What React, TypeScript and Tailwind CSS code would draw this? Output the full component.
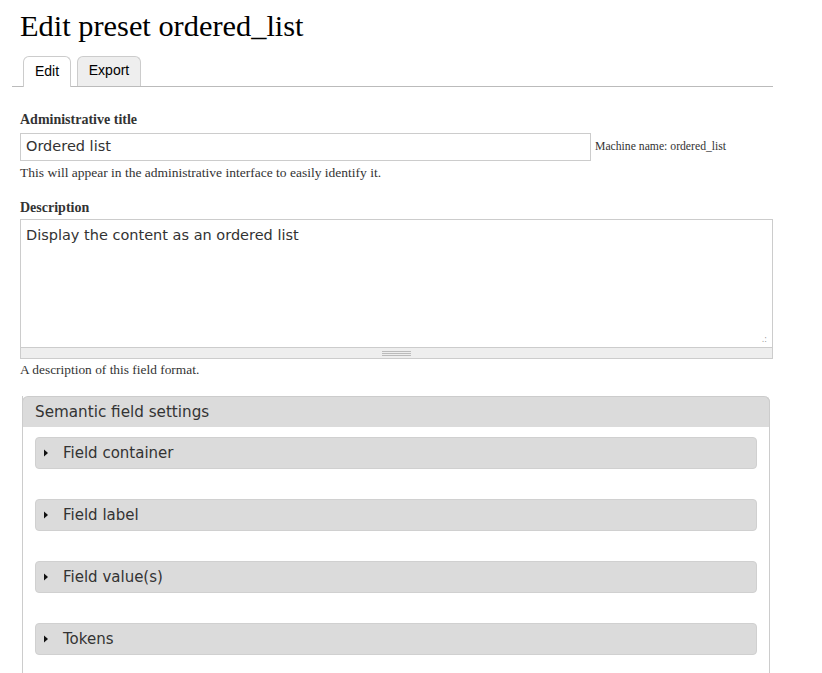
const sections = ["Field container", "Field label", "Field value(s)", "Tokens"];

const App = () => {
  return (
    <div className="min-h-[673px] bg-white pl-5 pr-[49px] pt-[6px] font-['Liberation_Serif',serif] text-[#333]">
      <h1 className="text-[30.4px] leading-[40px] text-black">Edit preset ordered_list</h1>

      <div className="-ml-2 mt-[10px] flex gap-[6px] border-b border-[#bbb] pl-[11px] font-['Liberation_Sans',sans-serif] text-sm">
        <div className="-mb-px flex h-[31px] w-[48px] items-center justify-center rounded-t-md border border-b-0 border-[#ccc] bg-white pb-[3px] text-black">
          Edit
        </div>
        <div className="mb-0 flex h-[30px] w-[64px] items-center justify-center rounded-t-md border border-b-0 border-[#ccc] bg-[#eee] pb-[3px] text-black">
          Export
        </div>
      </div>

      <div className="mt-[25px]">
        <label className="block text-sm font-bold leading-4">Administrative title</label>
        <div className="mt-[5px] flex items-center">
          <div className="flex h-[28px] w-[571px] items-center border border-[#ccc] px-[5px] font-['DejaVu_Sans',sans-serif] text-[14.5px]">
            Ordered list
          </div>
          <span className="ml-1 text-[11.7px]">Machine name: ordered_list</span>
        </div>
        <p className="mt-[4px] text-[13.5px] leading-4">This will appear in the administrative interface to easily identify it.</p>
      </div>

      <div className="mt-[19px]">
        <label className="block text-sm font-bold leading-4">Description</label>
        <div className="mt-[3px] border border-[#ccc]">
          <div className="relative h-[127px] px-[5px] pt-[7px] font-['DejaVu_Sans',sans-serif] text-[14.5px] leading-4">
            Display the content as an ordered list
            <span className="absolute bottom-[3px] right-[5px] text-[8px] leading-none text-[#999]">.:</span>
          </div>
          <div className="flex h-[11px] items-center justify-center border-t border-[#ccc] bg-[#eee]">
            <div className="flex w-[29px] flex-col gap-[1px]">
              <div className="h-px bg-[#bbb]" />
              <div className="h-px bg-[#bbb]" />
              <div className="h-px bg-[#bbb]" />
            </div>
          </div>
        </div>
        <p className="mt-[3px] text-[13.4px] leading-4">A description of this field format.</p>
      </div>

      <div className="ml-[2px] mr-[3px] mt-[18px] rounded-tr-md border-x border-[#ccc] font-['DejaVu_Sans',sans-serif]">
        <div className="-mx-px flex h-[31px] items-center rounded-t-md border border-b-0 border-[#ccc] bg-[#dbdbdb] pl-[12px] text-[15.2px] text-[#333]">
          Semantic field settings
        </div>
        <div className="flex flex-col gap-[30px] px-[12px] pb-[20px] pt-[10px]">
          {sections.map((s) => (
            <div
              key={s}
              className="flex h-[32px] items-center rounded border border-[#d0d0d0] bg-[#dbdbdb] pl-[7px] text-[15px] text-[#333]"
            >
              <svg width="6" height="8" viewBox="0 0 6 8" className="mr-[14px]">
                <path d="M1 0.5 L5 4 L1 7.5 Z" fill="#111" />
              </svg>
              {s}
            </div>
          ))}
        </div>
      </div>
    </div>
  );
};

export default App;
